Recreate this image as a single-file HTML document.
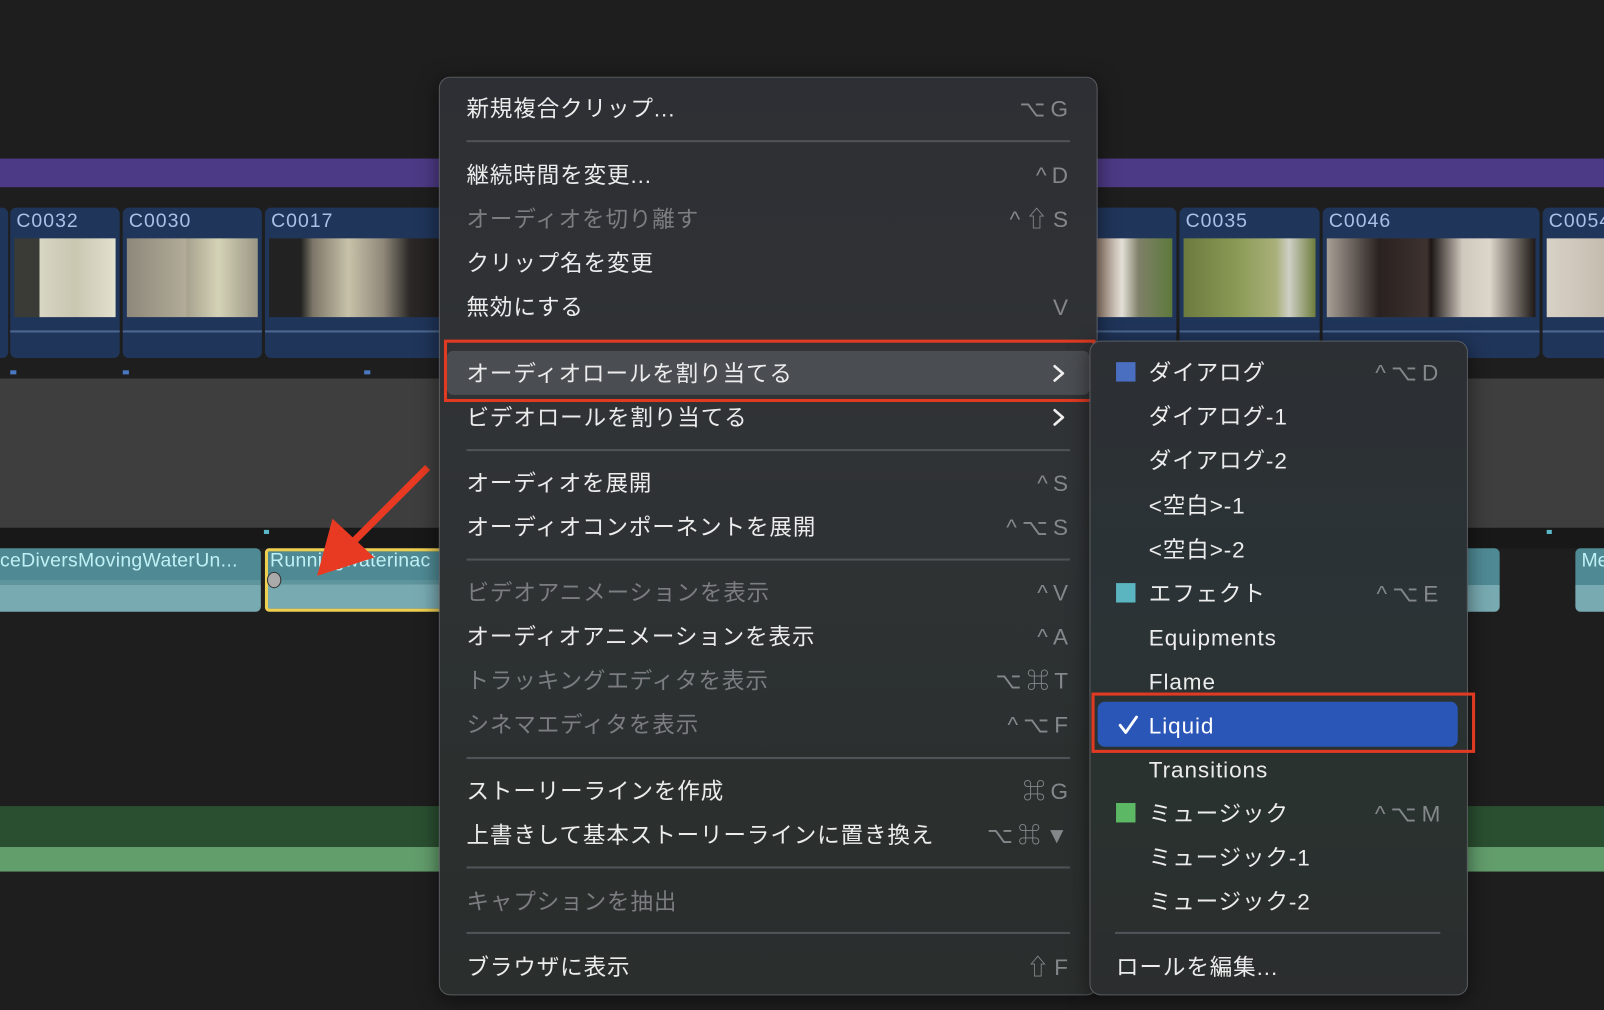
<!DOCTYPE html>
<html><head><meta charset="utf-8"><style>
html,body{margin:0;padding:0;width:1604px;height:1010px;overflow:hidden;background:#1e1e1e}
#w{position:absolute;left:0;top:0;width:1568px;height:987px;transform:scale(1.02296);transform-origin:0 0;background:#1e1e1e;font-family:"Liberation Sans","Noto Sans CJK JP",sans-serif}
.a{position:absolute}
.clip{position:absolute;top:203px;height:147px;background:#20355a;border-radius:6px;box-sizing:border-box}
.clip .l{position:absolute;left:6px;top:3px;color:#a9c1e6;font-size:19px;letter-spacing:1px}
.clip .t{position:absolute;top:30px;height:77px;left:4px;right:4px}
.clip .ln{position:absolute;top:120px;left:0;right:0;height:2px;background:#4c6890}
.menu{position:absolute;border:1px solid #5a5c60;border-radius:11px;box-sizing:border-box;box-shadow:0 4px 20px rgba(0,0,0,.5)}
.it{position:absolute;font-size:22px;color:#ececec;white-space:nowrap;line-height:30px;letter-spacing:0.9px}
.dis{color:#7b7d80}
.sc{position:absolute;font-size:22px;color:#85888b;text-align:right;white-space:nowrap;line-height:30px;letter-spacing:5px;margin-right:-5px}
.sep{position:absolute;height:2px;background:#505458}
.sq{position:absolute;width:19px;height:19px}
</style></head><body><div id="w">
<div class="a" style="left:0;top:155px;width:1568px;height:28px;background:#4d3a86"></div>
<div class="clip" style="left:-6px;width:14px"></div>
<div class="clip" style="left:10px;width:107px"><div class="l">C0032</div><div class="t" style="background:linear-gradient(90deg,#3a3a36 0 25%,#d8d6c4 25%,#c9c7b0 60%,#e3e1cf)"></div><div class="ln"></div></div>
<div class="clip" style="left:120px;width:136px"><div class="l">C0030</div><div class="t" style="background:linear-gradient(90deg,#8d887a,#b1ab98 45%,#a7a38f 46%,#d4d2b6 70%,#9a9684)"></div><div class="ln"></div></div>
<div class="clip" style="left:259px;width:180px"><div class="l">C0017</div><div class="t" style="background:linear-gradient(90deg,#222 0 18%,#7e7769 25%,#c7c2a9 45%,#8f887a 65%,#2b2826 80%,#201f1f)"></div><div class="ln"></div></div>
<div class="clip" style="left:1060px;width:90px"><div class="t" style="background:linear-gradient(90deg,#7c5a48,#e4e0d8 40%,#7e8068 60%,#5e7a3c)"></div><div class="ln"></div></div>
<div class="clip" style="left:1153px;width:137px"><div class="l">C0035</div><div class="t" style="background:linear-gradient(90deg,#6c7a3e,#8a9a55 40%,#a9b07a 70%,#cfcfc6 80%,#6e7d3c)"></div><div class="ln"></div></div>
<div class="clip" style="left:1293px;width:212px"><div class="l">C0046</div><div class="t" style="background:linear-gradient(90deg,#a7a096,#2a2220 25%,#3d3230 48%,#1c1615 50%,#cfc8be 65%,#ddd6ca 78%,#1e1816)"></div><div class="ln"></div></div>
<div class="clip" style="left:1508px;width:80px"><div class="l">C0054</div><div class="t" style="background:linear-gradient(90deg,#d8d2c6,#bfb6a8)"></div><div class="ln"></div></div>
<div class="a" style="left:10px;top:362px;width:6px;height:4px;background:#4a78c0"></div>
<div class="a" style="left:120px;top:362px;width:6px;height:4px;background:#4a78c0"></div>
<div class="a" style="left:356px;top:362px;width:6px;height:4px;background:#4a78c0"></div>
<div class="a" style="left:0;top:370px;width:1568px;height:146px;background:#3e3e3e"></div>
<div class="a" style="left:0;top:516px;width:1568px;height:20px;background:#181818"></div>
<div class="a" style="left:258px;top:518px;width:5px;height:4px;background:#5ab8c8"></div>
<div class="a" style="left:1512px;top:518px;width:5px;height:4px;background:#5ab8c8"></div>
<div class="a" style="left:0;top:536px;width:255px;height:62px;background:linear-gradient(#4f8a94 0 50%,#5e949c 50% 58%,#78aab2 58%);border-radius:0 5px 5px 0"></div>
<div class="a" style="left:0;top:538px;color:#bff0f5;font-size:19px;white-space:nowrap;letter-spacing:0.3px">ceDiversMovingWaterUn...</div>
<div class="a" style="left:259px;top:536px;width:180px;height:62px;background:linear-gradient(#4f8a94 0 50%,#5e949c 50% 58%,#78aab2 58%);border:3px solid #edcf52;box-sizing:border-box;border-radius:4px"></div>
<div class="a" style="left:264px;top:538px;color:#bff0f5;font-size:19px;white-space:nowrap;letter-spacing:0.3px">Runningwaterinac</div>
<div class="a" style="left:261px;top:559px;width:12px;height:14px;border-radius:50%;background:#aaa;border:1px solid #333"></div>
<div class="a" style="left:1380px;top:536px;width:86px;height:62px;background:linear-gradient(#4f8a94 0 58%,#78aab2 58%);border-radius:5px"></div>
<div class="a" style="left:1540px;top:536px;width:40px;height:62px;background:linear-gradient(#4f8a94 0 58%,#78aab2 58%);border-radius:5px"></div>
<div class="a" style="left:1546px;top:538px;color:#bff0f5;font-size:19px">Me</div>
<div class="a" style="left:0;top:788px;width:1568px;height:40px;background:#2a4f30"></div>
<div class="a" style="left:0;top:828px;width:1568px;height:24px;background:#629d6c"></div>
<svg class="a" style="left:290px;top:445px" width="140" height="130"><line x1="128" y1="12" x2="50" y2="90" stroke="#e83a22" stroke-width="7"/><polygon points="20,118 35,62 76,100" fill="#e83a22"/></svg>

<div class="menu" style="left:429px;top:75px;width:644px;height:898px;background:linear-gradient(180deg,#2e2f34 0%,#303336 40%,#2b302f 75%,#2a2e2d 100%)"></div>
<div class="a" style="left:437px;top:343px;width:628px;height:43px;background:#4a4d52;border-radius:6px"></div>
<div class="a" style="left:434px;top:332px;width:637px;height:61px;border:3px solid #e03a22;box-sizing:border-box"></div>
<div class="sep" style="left:456px;top:137px;width:590px"></div>
<div class="sep" style="left:456px;top:439px;width:590px"></div>
<div class="sep" style="left:456px;top:546px;width:590px"></div>
<div class="sep" style="left:456px;top:740px;width:590px"></div>
<div class="sep" style="left:456px;top:847px;width:590px"></div>
<div class="sep" style="left:456px;top:911px;width:590px"></div>

<div class="it" style="left:456px;top:92px">新規複合クリップ...</div><div class="sc" style="right:524px;top:92px">⌥G</div>
<div class="it" style="left:456px;top:157px">継続時間を変更...</div><div class="sc" style="right:524px;top:157px">^D</div>
<div class="it dis" style="left:456px;top:200px">オーディオを切り離す</div><div class="sc" style="right:524px;top:200px">^⇧S</div>
<div class="it" style="left:456px;top:243px">クリップ名を変更</div>
<div class="it" style="left:456px;top:286px">無効にする</div><div class="sc" style="right:524px;top:286px">V</div>
<div class="it" style="left:456px;top:351px">オーディオロールを割り当てる</div>
<svg class="a" style="left:1028px;top:355px" width="14" height="20"><path d="M3 3 L11 10 L3 17" stroke="#eee" stroke-width="2.6" fill="none" stroke-linecap="round" stroke-linejoin="round"/></svg>
<div class="it" style="left:456px;top:394px">ビデオロールを割り当てる</div>
<svg class="a" style="left:1028px;top:398px" width="14" height="20"><path d="M3 3 L11 10 L3 17" stroke="#eee" stroke-width="2.6" fill="none" stroke-linecap="round" stroke-linejoin="round"/></svg>
<div class="it" style="left:456px;top:458px">オーディオを展開</div><div class="sc" style="right:524px;top:458px">^S</div>
<div class="it" style="left:456px;top:501px">オーディオコンポーネントを展開</div><div class="sc" style="right:524px;top:501px">^⌥S</div>
<div class="it dis" style="left:456px;top:565px">ビデオアニメーションを表示</div><div class="sc" style="right:524px;top:565px">^V</div>
<div class="it" style="left:456px;top:608px">オーディオアニメーションを表示</div><div class="sc" style="right:524px;top:608px">^A</div>
<div class="it dis" style="left:456px;top:651px">トラッキングエディタを表示</div><div class="sc" style="right:524px;top:651px">⌥⌘T</div>
<div class="it dis" style="left:456px;top:694px">シネマエディタを表示</div><div class="sc" style="right:524px;top:694px">^⌥F</div>
<div class="it" style="left:456px;top:759px">ストーリーラインを作成</div><div class="sc" style="right:524px;top:759px">⌘G</div>
<div class="it" style="left:456px;top:802px">上書きして基本ストーリーラインに置き換え</div><div class="sc" style="right:524px;top:802px">⌥⌘▼</div>
<div class="it dis" style="left:456px;top:867px">キャプションを抽出</div>
<div class="it" style="left:456px;top:931px">ブラウザに表示</div><div class="sc" style="right:524px;top:931px">⇧F</div>

<div class="menu" style="left:1065px;top:333px;width:370px;height:640px;background:linear-gradient(180deg,#2c2f33 0%,#2b3336 40%,#2a322f 70%,#2b2d2e 100%)"></div>
<div class="a" style="left:1073px;top:686px;width:352px;height:44px;background:#2a56b8;border-radius:7px"></div>
<div class="a" style="left:1067px;top:677px;width:375px;height:59px;border:3px solid #e03a22;box-sizing:border-box"></div>
<div class="sep" style="left:1090px;top:911px;width:318px"></div>
<div class="sq" style="left:1091px;top:354px;background:#4a6fc0"></div>
<div class="sq" style="left:1091px;top:570px;background:#5ab5c0"></div>
<div class="sq" style="left:1091px;top:785px;background:#5cb865"></div>
<div class="it" style="left:1123px;top:350px">ダイアログ</div><div class="sc" style="right:162px;top:350px">^⌥D</div>
<div class="it" style="left:1123px;top:393px">ダイアログ-1</div>
<div class="it" style="left:1123px;top:436px">ダイアログ-2</div>
<div class="it" style="left:1123px;top:480px">&lt;空白&gt;-1</div>
<div class="it" style="left:1123px;top:523px">&lt;空白&gt;-2</div>
<div class="it" style="left:1123px;top:566px">エフェクト</div><div class="sc" style="right:162px;top:566px">^⌥E</div>
<div class="it" style="left:1123px;top:609px">Equipments</div>
<div class="it" style="left:1123px;top:652px">Flame</div>
<svg class="a" style="left:1092px;top:698px" width="22" height="22"><path d="M3 11 L8.5 18 L19 3" stroke="#fff" stroke-width="2.8" fill="none" stroke-linecap="round" stroke-linejoin="round"/></svg>
<div class="it" style="left:1123px;top:695px;color:#fff">Liquid</div>
<div class="it" style="left:1123px;top:738px">Transitions</div>
<div class="it" style="left:1123px;top:781px">ミュージック</div><div class="sc" style="right:160px;top:781px">^⌥M</div>
<div class="it" style="left:1123px;top:824px">ミュージック-1</div>
<div class="it" style="left:1123px;top:867px">ミュージック-2</div>
<div class="it" style="left:1091px;top:931px">ロールを編集...</div>
</div></body></html>
